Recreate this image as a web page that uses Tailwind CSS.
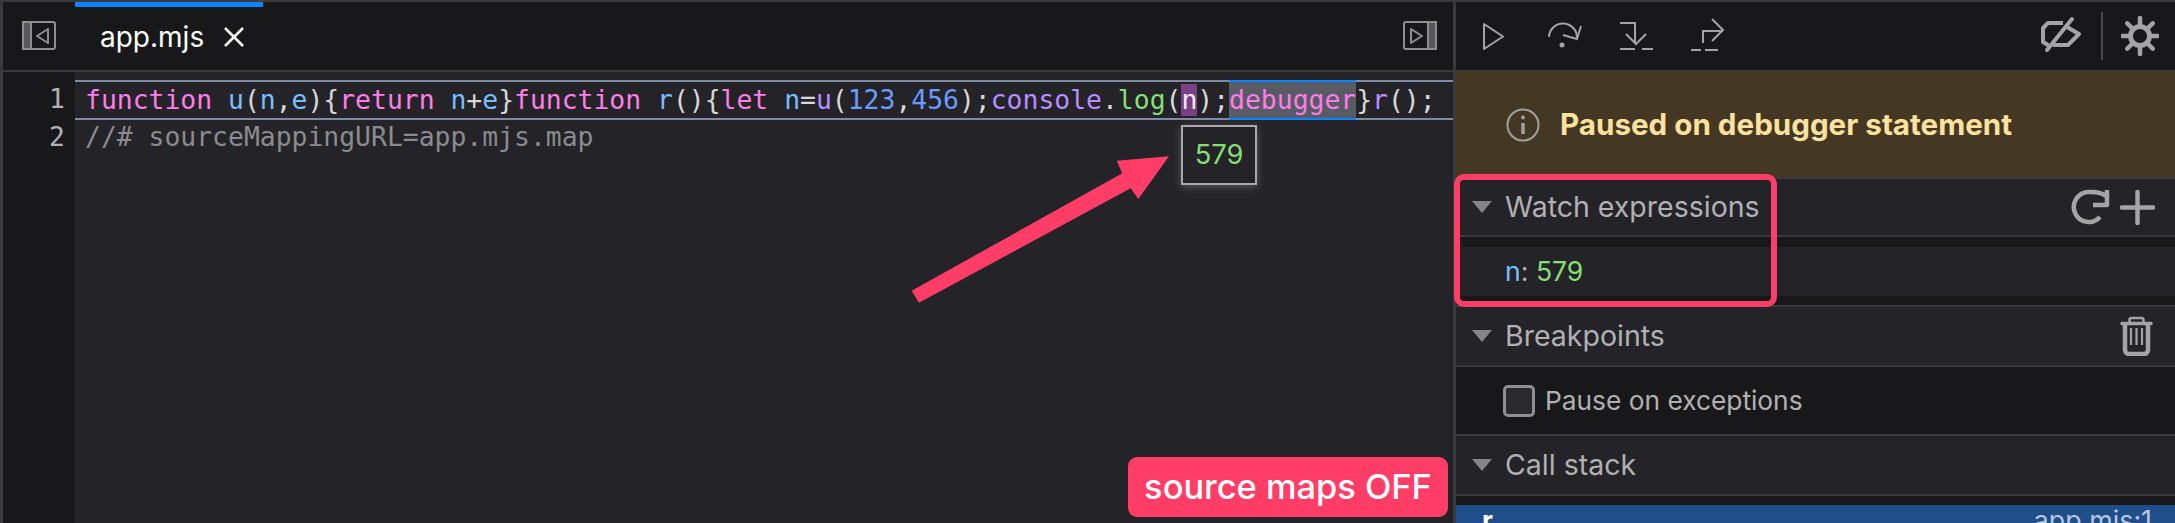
<!DOCTYPE html>
<html lang="en">
<head>
  <meta charset="UTF-8" />
  <title>app.mjs debugger</title>
  <script src="https://cdn.jsdelivr.net/npm/@tailwindcss/browser@4"></script>
</head>
<body class="bg-[#18181a] overflow-hidden">
  <div class="relative w-[2175px] h-[523px] flex border-t-2 border-l-[3px] border-[#3a3a3e] font-['Inter',sans-serif] overflow-hidden">

    <!-- Source pane -->
    <div class="w-[1450px] flex flex-col shrink-0">
      <!-- Tabs -->
      <div class="h-[68px] flex items-stretch bg-[#18181a]">
        <div class="w-[72px] flex items-center justify-center">
          <svg width="34" height="30" viewBox="0 0 34 30" fill="none" stroke="#8f8f93" stroke-width="2">
            <rect x="1" y="1" width="32" height="27" rx="2"/>
            <rect x="1" y="1" width="8" height="27" fill="#58585c"/>
            <path d="M26 8v14l-11-7z" stroke-linejoin="round"/>
          </svg>
        </div>
        <div class="w-[188px] border-t-[5px] border-[#0a84ff] flex items-center pl-[25px] gap-[20px] text-white text-[28px] pb-[4px]">
          <span>app.mjs</span>
          <svg width="20" height="20" viewBox="0 0 20 20" stroke="#fff" stroke-width="2.500" fill="none"><path d="M1 1l18 18M19 1L1 19"/></svg>
        </div>
        <div class="flex-1 flex items-center justify-end pr-[16px]">
          <svg width="34" height="30" viewBox="0 0 34 30" fill="none" stroke="#8f8f93" stroke-width="2">
            <rect x="1" y="1" width="32" height="27" rx="2"/>
            <rect x="25" y="1" width="8" height="27" fill="#58585c"/>
            <path d="M8 8v14l11-7z" stroke-linejoin="round"/>
          </svg>
        </div>
      </div>
      <!-- Editor -->
      <div class="flex-1 flex border-t-2 border-[#3a3a3e] font-['DejaVu_Sans_Mono',monospace] text-[26.400px]">
        <div class="w-[72px] bg-[#18181a] text-[#b1b1b3] text-right pr-[10px] pt-[8px] leading-[38px]">
          <div class="h-[38px]">1</div>
          <div class="h-[34px]">2</div>
        </div>
        <div class="flex-1 bg-[#232328] pt-[8px]">
          <div class="h-[40px] border-y-2 border-[#7d8ba5] pl-[10px] leading-[36px] whitespace-pre text-[#d7d7db]"><span class="text-[#ff7de9]">function</span> <span class="text-[#75bfff]">u</span>(<span class="text-[#75bfff]">n</span>,<span class="text-[#75bfff]">e</span>){<span class="text-[#ff7de9]">return</span> <span class="text-[#75bfff]">n</span>+<span class="text-[#75bfff]">e</span>}<span class="text-[#ff7de9]">function</span> <span class="text-[#75bfff]">r</span>(){<span class="text-[#ff7de9]">let</span> <span class="text-[#75bfff]">n</span>=<span class="text-[#b98eff]">u</span>(<span class="text-[#6b9bff]">123</span>,<span class="text-[#6b9bff]">456</span>);<span class="text-[#b98eff]">console</span>.<span class="text-[#86de74]">log</span>(<span class="bg-[#7a4185] text-[#f5e9f0] inline-block h-[32px] leading-[32px] align-top mt-[2px]">n</span>);<span class="text-[#ff7de9] bg-[#565b66] inline-block h-[40px] leading-[36px] align-top -mt-[2px] border-y-2 border-[#0a84ff]">debugger</span>}<span class="text-[#b98eff]">r</span>();</div>
          <div class="h-[35px] pl-[10px] leading-[33px] text-[#8b8b8e] whitespace-pre">//# sourceMappingURL=app.mjs.map</div>
        </div>
      </div>
    </div>

    <!-- Divider -->
    <div class="w-[3px] bg-[#3a3a3e] shrink-0"></div>

    <!-- Debugger sidebar -->
    <div class="flex-1 flex flex-col text-[#b1b1b3] text-[28.500px] min-w-0">
      <!-- Toolbar -->
      <div class="h-[68px] shrink-0 flex items-center bg-[#18181a]">
        <div class="flex items-center pl-[26px]">
          <svg width="24" height="40" viewBox="0 0 24 40" fill="none" stroke="#a4a4a7" stroke-width="2" stroke-linejoin="round"><path d="M2 8v25l19-12.500z"/></svg>
          <svg class="ml-[40px]" width="40" height="40" viewBox="0 0 40 40" fill="none" stroke="#a4a4a7" stroke-width="2"><path d="M3 21A14 14 0 0 1 31 22"/><path d="M35 10l-4 13-14-4"/><circle cx="16" cy="29" r="2.500" fill="#a4a4a7" stroke="none"/></svg>
          <svg class="ml-[32px]" width="38" height="40" viewBox="0 0 38 40" fill="none" stroke="#a4a4a7" stroke-width="2"><path d="M2 7h15v20"/><path d="M8 18l10 10 10-10"/><path d="M2 33h15M24 33h11"/></svg>
          <svg class="ml-[33px]" width="38" height="40" viewBox="0 0 38 40" fill="none" stroke="#a4a4a7" stroke-width="2"><path d="M14 27V15h20"/><path d="M23 3l11 11-11 11"/><path d="M2 34h10M16 34h13"/></svg>
        </div>
        <div class="ml-auto flex items-center">
          <svg width="42" height="40" viewBox="0 0 42 40" fill="none" stroke="#a4a4a7" stroke-width="4" stroke-linejoin="round"><path d="M23 7H8l-5 5v14l5 3h1"/><path d="M27 11l12 7-11 11H13"/><path d="M32 3L7 34" stroke-linecap="round"/></svg>
          <div class="w-[2px] h-[48px] bg-[#4a4a4e] ml-[19px] mr-[18px]"></div>
          <svg class="mr-[16px]" width="38" height="40" viewBox="0 0 38 40" fill="none" stroke="#a4a4a7"><circle cx="19" cy="20" r="9.500" stroke-width="5"/><path d="M19 2v6M19 32v6M1 20h6M31 20h6M6.300 7.300l4.200 4.200M27.500 28.500l4.200 4.200M6.300 32.700l4.200-4.200M27.500 11.500l4.200-4.200" stroke-width="4.500" stroke-linecap="round"/></svg>
        </div>
      </div>
      <!-- Paused banner -->
      <div class="h-[107px] shrink-0 border-t-2 border-[#3a3a3e] bg-[#443824] flex items-center pl-[50px] gap-[20px]">
        <svg width="34" height="36" viewBox="0 0 34 36" fill="none" stroke="#a2a19b" stroke-width="2"><circle cx="17" cy="18" r="15.500"/><path d="M17 16v11" stroke-width="3.500"/><circle cx="17" cy="10.500" r="2" fill="#a2a19b" stroke="none"/></svg>
        <span class="text-[#fce19f] font-bold text-[29.600px]">Paused on debugger statement</span>
      </div>
      <!-- Watch expressions -->
      <div class="h-[58px] shrink-0 border-t-2 border-[#3a3a3e] bg-[#232328] flex items-center pl-[16px] pr-[20px]">
        <span class="w-0 h-0 border-x-[10px] border-x-transparent border-t-[12px] border-t-[#858589] mr-[13px]"></span>
        <span>Watch expressions</span>
        <svg class="ml-auto" width="40" height="40" viewBox="0 0 40 40" fill="none" stroke="#a4a4a7" stroke-width="4.500"><path d="M36 9C33 6.500 26 4.500 19 5A15 15 0 1 0 30 30"/><path d="M37 3v15H23" stroke-linejoin="round"/></svg>
        <svg class="ml-[10px]" width="35" height="35" viewBox="0 0 35 35" fill="none" stroke="#a4a4a7" stroke-width="4.500" stroke-linecap="round"><path d="M17.500 2v31M2 17.500h31"/></svg>
      </div>
      <div class="h-[12px] shrink-0 border-t-2 border-[#3a3a3e] bg-[#18181a]"></div>
      <div class="h-[49px] shrink-0 bg-[#232328] flex items-center pl-[49px] text-[26.600px]">
        <span class="text-[#75bfff]">n</span><span>:&nbsp;</span><span class="text-[#86de74]">579</span>
      </div>
      <div class="h-[9px] shrink-0 bg-[#18181a]"></div>
      <!-- Breakpoints -->
      <div class="h-[60px] shrink-0 border-t-2 border-[#3a3a3e] bg-[#232328] flex items-center pl-[16px] pr-[22px]">
        <span class="w-0 h-0 border-x-[10px] border-x-transparent border-t-[12px] border-t-[#858589] mr-[13px]"></span>
        <span>Breakpoints</span>
        <svg class="ml-auto" width="33" height="40" viewBox="0 0 33 40" fill="none" stroke="#a4a4a7"><path d="M2 7.500h29" stroke-width="3.500" stroke-linecap="round"/><path d="M9.500 6V4a2 2 0 0 1 2-2h10a2 2 0 0 1 2 2v2" stroke-width="2.500"/><path d="M5 9v25a4 4 0 0 0 4 4h15a4 4 0 0 0 4-4V9" stroke-width="4.500"/><path d="M11 12v17M16.500 12v17M22 12v17" stroke-width="2.200"/></svg>
      </div>
      <div class="h-[69px] shrink-0 border-t-2 border-[#3a3a3e] bg-[#18181a] flex items-center pl-[47px] gap-[10px] text-[26.300px]">
        <span class="w-[32px] h-[32px] rounded-[5px] border-[3px] border-[#8f8f93] bg-[#2a2a2e]"></span>
        <span>Pause on exceptions</span>
      </div>
      <!-- Call stack -->
      <div class="h-[60px] shrink-0 border-t-2 border-[#3a3a3e] bg-[#232328] flex items-center pl-[16px]">
        <span class="w-0 h-0 border-x-[10px] border-x-transparent border-t-[12px] border-t-[#858589] mr-[13px]"></span>
        <span>Call stack</span>
      </div>
      <div class="h-[11px] shrink-0 border-t-2 border-[#3a3a3e] bg-[#18181a]"></div>
      <div class="flex-1 min-h-0 overflow-hidden bg-[#204e8a] flex items-start justify-between pl-[26px] pr-[23px] text-[26.800px] leading-[30px]">
        <span class="text-white font-bold">r</span>
        <span class="text-[#b5c8e0]">app.mjs:1</span>
      </div>
    </div>

    <!-- Preview tooltip -->
    <div class="absolute left-[1178px] top-[123px] w-[76px] h-[60px] border-2 border-[#a8a8aa] bg-[#232328] flex items-center justify-center text-[#86de74] text-[27.300px] shadow-[0_2px_8px_rgba(255,255,255,0.25)]">579</div>

    <!-- Annotation: arrow -->
    <svg class="absolute left-[897px] top-[138px]" width="290" height="170" viewBox="0 0 290 170">
      <path d="M11.700 150.700L222.300 33.300L216.700 20.700L269 16.300L238.300 59L230.700 48.300L19 162.700z" fill="#ff3d66"/>
    </svg>

    <!-- Annotation: label -->
    <div class="absolute left-[1125px] top-[455px] w-[320px] h-[60px] rounded-[9px] bg-[#ff3d66] text-white text-[34.400px] flex items-center justify-center font-medium">source maps OFF</div>

    <!-- Annotation: watch outline -->
    <div class="absolute left-[1451px] top-[172px] w-[323px] h-[133px] rounded-[10px] border-[6px] border-[#ff3d66]"></div>
  </div>
</body>
</html>
